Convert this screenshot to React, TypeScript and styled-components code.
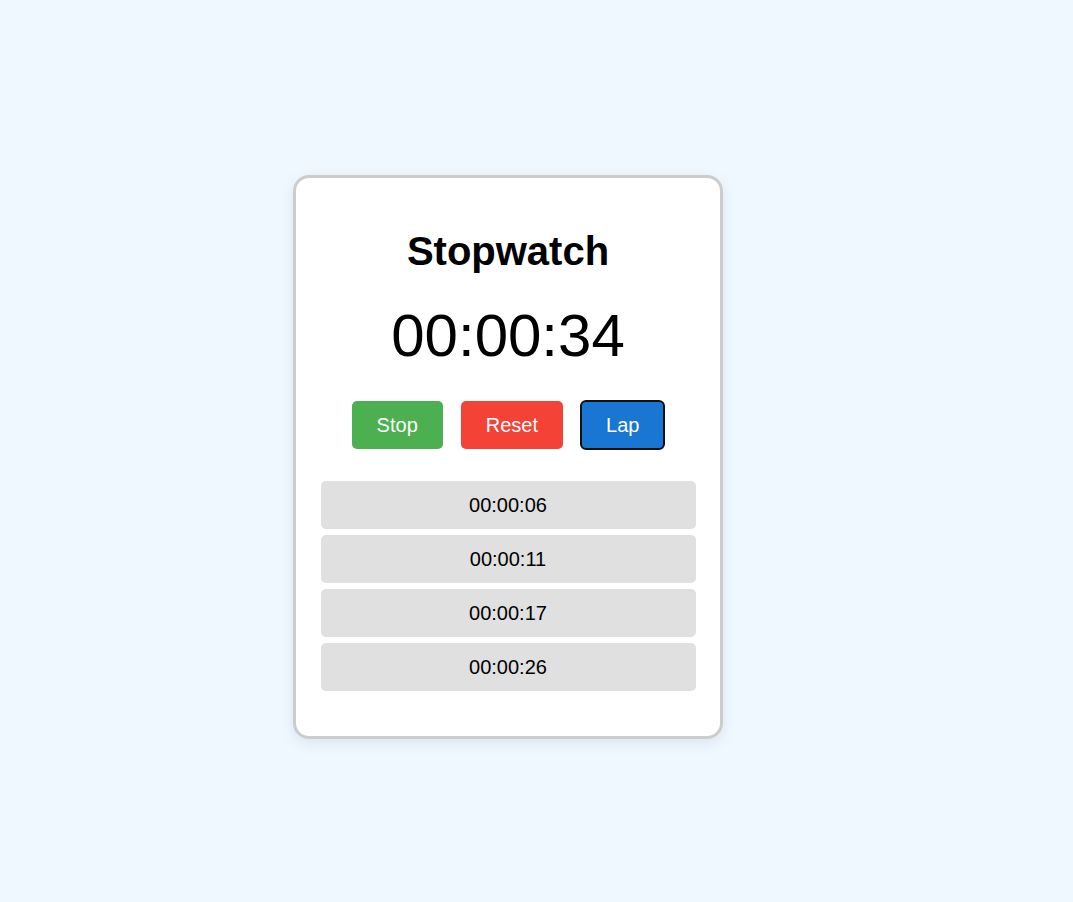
import React from "react";
import styled, { createGlobalStyle } from "styled-components";

const GlobalStyle = createGlobalStyle`
  html, body {
    margin: 0;
    padding: 0;
    background: #f0f8ff;
    font-family: "Liberation Sans", Arial, sans-serif;
  }
  * { box-sizing: border-box; }
`;

const Page = styled.main`
  min-height: 902px;
  padding: 175px 0 0 293px;
  background: #f0f8ff;
`;

const Card = styled.section`
  width: 430px;
  height: 564px;
  background: #ffffff;
  border: 3px solid #cccccc;
  border-radius: 16px;
  box-shadow: 0 4px 14px rgba(40, 60, 90, 0.1);
  padding: 24px 24.5px 45px;
  display: flex;
  flex-direction: column;
  align-items: center;
`;

const Title = styled.h1`
  margin: 26px 0 0;
  font-size: 40px;
  line-height: 46px;
  font-weight: 700;
  color: #000;
`;

const Time = styled.div`
  margin-top: 27px;
  font-size: 60px;
  line-height: 69px;
  color: #000;
`;

const Controls = styled.div`
  margin-top: 31px;
  display: flex;
  gap: 18px;
`;

const Button = styled.button<{ $bg: string; $focused?: boolean }>`
  height: 48px;
  padding: 0 25px;
  border: none;
  border-radius: 5px;
  background: ${(p) => p.$bg};
  color: #fff;
  font-family: "Liberation Sans", Arial, sans-serif;
  font-size: 20px;
  line-height: 24px;
  cursor: pointer;
  outline: ${(p) => (p.$focused ? "2px solid #111" : "none")};
  outline-offset: -1px;
`;

const LapList = styled.ul`
  list-style: none;
  margin: 32px 0 0;
  padding: 0;
  width: 100%;
  display: flex;
  flex-direction: column;
  gap: 6px;
`;

const LapItem = styled.li`
  height: 48px;
  background: #e0e0e0;
  border-radius: 5px;
  display: flex;
  align-items: center;
  justify-content: center;
  font-size: 20px;
  color: #000;
`;

const laps = ["00:00:06", "00:00:11", "00:00:17", "00:00:26"];

export default function App() {
  return (
    <>
      <GlobalStyle />
      <Page>
        <Card>
          <Title>Stopwatch</Title>
          <Time>00:00:34</Time>
          <Controls>
            <Button $bg="#4caf50">Stop</Button>
            <Button $bg="#f44336">Reset</Button>
            <Button $bg="#1976d2" $focused>
              Lap
            </Button>
          </Controls>
          <LapList>
            {laps.map((l) => (
              <LapItem key={l}>{l}</LapItem>
            ))}
          </LapList>
        </Card>
      </Page>
    </>
  );
}
